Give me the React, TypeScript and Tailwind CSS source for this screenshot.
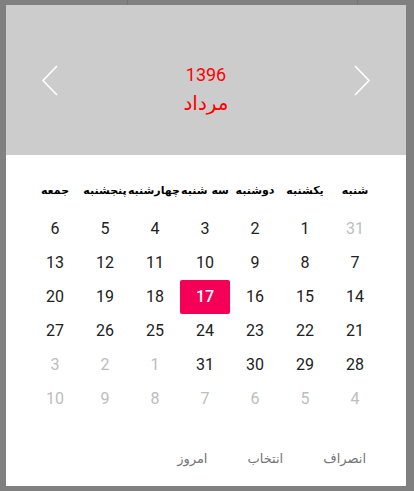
const weekDays = ["شنبه", "یکشنبه", "دوشنبه", "سه شنبه", "چهارشنبه", "پنجشنبه", "جمعه"];

type Day = { n: number; muted?: boolean; selected?: boolean };

const rows: Day[][] = [
  [{ n: 31, muted: true }, { n: 1 }, { n: 2 }, { n: 3 }, { n: 4 }, { n: 5 }, { n: 6 }],
  [{ n: 7 }, { n: 8 }, { n: 9 }, { n: 10 }, { n: 11 }, { n: 12 }, { n: 13 }],
  [{ n: 14 }, { n: 15 }, { n: 16 }, { n: 17, selected: true }, { n: 18 }, { n: 19 }, { n: 20 }],
  [{ n: 21 }, { n: 22 }, { n: 23 }, { n: 24 }, { n: 25 }, { n: 26 }, { n: 27 }],
  [{ n: 28 }, { n: 29 }, { n: 30 }, { n: 31 }, { n: 1, muted: true }, { n: 2, muted: true }, { n: 3, muted: true }],
  [
    { n: 4, muted: true },
    { n: 5, muted: true },
    { n: 6, muted: true },
    { n: 7, muted: true },
    { n: 8, muted: true },
    { n: 9, muted: true },
    { n: 10, muted: true },
  ],
];

function Chevron({ dir }: { dir: "left" | "right" }) {
  return (
    <svg width="18" height="31" viewBox="0 0 18 31" fill="none">
      <path
        d={dir === "left" ? "M16 1 L2 15.5 L16 30" : "M2 1 L16 15.5 L2 30"}
        stroke="white"
        strokeWidth="1.6"
      />
    </svg>
  );
}

export default function App() {
  return (
    <div className="relative w-[414px] h-[491px] bg-[#808080] pt-[5px] pl-[6px]">
      <div className="absolute top-0 left-[127px] w-px h-[5px] bg-[#747474]" />
      <div className="absolute top-0 left-[357px] w-px h-[5px] bg-[#747474]" />
      <div className="w-[400px] h-[481px] bg-white flex flex-col">
        <div className="h-[150px] bg-[#cccccc] flex items-center justify-between px-[35px]">
          <Chevron dir="left" />
          <div className="flex flex-col items-center text-[#ff0000] pt-[22px]">
            <span className="text-[18px] leading-[24px] font-['Roboto',sans-serif]">1396</span>
            <span className="text-[20px] leading-[32px] font-['DejaVu_Sans',sans-serif]">مرداد</span>
          </div>
          <Chevron dir="right" />
        </div>

        <div dir="rtl" className="pl-[24px] pr-[26px] pt-[20px]">
          <div className="grid grid-cols-7 h-[32px] items-center mb-[5px]">
            {weekDays.map((d) => (
              <div
                key={d}
                className="text-center text-[11px] font-bold text-black whitespace-nowrap font-['DejaVu_Sans',sans-serif]"
              >
                {d}
              </div>
            ))}
          </div>
          {rows.map((row, i) => (
            <div key={i} className="grid grid-cols-7">
              {row.map((d, j) => (
                <div
                  key={j}
                  className={
                    d.selected
                      ? "h-[34px] flex items-center justify-center rounded-[2px] bg-[#f50057] text-white font-medium text-[16px] font-['Roboto',sans-serif]"
                      : d.muted
                        ? "h-[34px] flex items-center justify-center text-[#bdbdbd] text-[16px] font-['Roboto',sans-serif]"
                        : "h-[34px] flex items-center justify-center text-[#212121] text-[16px] font-['Roboto',sans-serif]"
                  }
                >
                  {d.n}
                </div>
              ))}
            </div>
          ))}
        </div>

        <div dir="rtl" className="mt-auto mb-[9px] px-5 flex text-[13px] text-[#757575] font-['DejaVu_Sans',sans-serif]">
          <button className="px-5 h-[36px]">انصراف</button>
          <button className="px-5 h-[36px]">انتخاب</button>
          <button className="px-5 h-[36px]">امروز</button>
        </div>
      </div>
    </div>
  );
}
